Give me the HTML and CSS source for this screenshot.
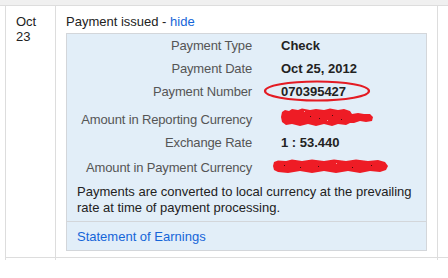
FILE: index.html
```html
<!DOCTYPE html>
<html lang="en">
<head>
  <meta charset="UTF-8" />
  <title>Payment history</title>
  <link rel="stylesheet" href="styles.css">
</head>
<body>
  <div class="top-strip"></div>

  <div class="entry">
    <div class="cell date-cell">Oct<br>23</div>
    <div class="cell detail-cell">
      <div class="event-title">Payment issued - <a href="#" class="link">hide</a></div>

      <div class="payment-box">
        <div class="payment-grid">
          <div class="label">Payment Type</div>
          <div class="value">Check</div>

          <div class="label">Payment Date</div>
          <div class="value">Oct 25, 2012</div>

          <div class="label">Payment Number</div>
          <div class="value"><span class="circled">070395427<svg class="circle-mark" width="110" height="24" viewBox="0 0 110 24"><ellipse cx="55" cy="12" rx="52" ry="9.5" fill="none" stroke="#e41b23" stroke-width="2.2"/></svg></span></div>

          <div class="label row-tall">Amount in Reporting Currency</div>
          <div class="value row-tall">
            <svg class="redact redact-a" width="94" height="19" viewBox="0 0 94 19">
              <path d="M1 9 L2 4 L5 2 L9 3 L12 1 L18 2 L22 0.5 L30 2 L36 1 L44 2 L50 0.5 L58 2 L64 1 L70 3 L72 6 L78 5 L84 6 L90 6 L93 9 L92 13 L86 14 L80 13 L74 15 L70 15 L66 17 L58 16 L52 18 L44 16 L36 18 L28 16 L20 18 L12 16 L6 17 L2 14 Z" fill="#ee1c25"/>
              <rect x="30" y="8" width="1" height="1" fill="#4a0c0c"/>
              <rect x="39" y="10" width="1" height="1" fill="#4a0c0c"/>
              <rect x="52" y="7" width="1" height="1" fill="#4a0c0c"/>
              <rect x="61" y="11" width="1" height="1" fill="#4a0c0c"/>
              <rect x="24" y="3" width="1" height="1" fill="#f6a0a0"/>
              <rect x="47" y="12" width="1" height="1" fill="#f6a0a0"/>
            </svg>
          </div>

          <div class="label">Exchange Rate</div>
          <div class="value">1 : 53.440</div>

          <div class="label row-mid">Amount in Payment Currency</div>
          <div class="value row-mid shift-left">
            <svg class="redact redact-b" width="117" height="15" viewBox="0 0 117 15">
              <path d="M1 7 L2 3 L6 1.5 L14 2 L20 0.5 L30 2 L40 0.5 L52 2 L62 0.5 L74 2 L84 0.5 L96 2 L106 1 L113 3 L116 7 L114 11 L108 13 L98 12 L88 14 L76 12 L64 14 L52 12 L40 14 L28 12 L16 14 L6 13 L2 11 Z" fill="#ee1c25"/>
              <rect x="12" y="6" width="1" height="1" fill="#4a0c0c"/>
              <rect x="28" y="8" width="1" height="1" fill="#4a0c0c"/>
              <rect x="46" y="7" width="1" height="1" fill="#4a0c0c"/>
              <rect x="80" y="8" width="1" height="1" fill="#4a0c0c"/>
              <rect x="99" y="6" width="1" height="1" fill="#4a0c0c"/>
              <rect x="64" y="4" width="1" height="1" fill="#f6a0a0"/>
            </svg>
          </div>
        </div>

        <p class="note">Payments are converted to local currency at the prevailing rate at time of payment processing.</p>

        <div class="box-footer">
          <a href="#" class="link">Statement of Earnings</a>
        </div>
      </div>
    </div>
    <div class="cell extra-cell"></div>
  </div>

  <div class="entry entry-next">
    <div class="cell date-cell"></div>
    <div class="cell detail-cell"></div>
    <div class="cell extra-cell"></div>
  </div>
</body>
</html>
```

FILE: styles.css
```css
body {
  margin: 0;
  font-family: "Liberation Sans", Arial, sans-serif;
  font-size: 13px;
  line-height: 15px;
  color: #222;
  background: #fff;
  overflow: hidden;
}

.top-strip {
  height: 5px;
  background: #f0f0f0;
  border-bottom: 1px solid #dddddd;
}

.entry {
  display: flex;
  margin-left: 5px;
  border-left: 1px solid #dddddd;
  border-bottom: 1px solid #dddddd;
}

.entry-next {
  height: 2px;
  border-bottom: none;
}

.cell {
  box-sizing: border-box;
}

.date-cell {
  width: 50px;
  padding: 8px 0 0 10px;
  border-right: 1px solid #dddddd;
}

.detail-cell {
  width: 382px;
  padding: 8px 10px 6px 10px;
  border-right: 1px solid #dddddd;
}

.entry-next .date-cell,
.entry-next .detail-cell {
  padding: 0;
}

.extra-cell {
  flex: 1;
}

.link {
  color: #1565d8;
  text-decoration: none;
}

.event-title {
  margin-bottom: 4px;
}

.payment-box {
  width: 361px;
  box-sizing: border-box;
  background: #e2eef8;
  border: 1px solid #d3d6da;
}

.payment-grid {
  display: grid;
  grid-template-columns: 185px auto;
  column-gap: 29px;
}

.label {
  text-align: right;
  color: #555;
  letter-spacing: -0.15px;
  padding: 4px 0;
}

.value {
  font-weight: bold;
  color: #222;
  padding: 4px 0;
}

.row-tall {
  padding-top: 9px;
}

.row-mid {
  padding-top: 6px;
}

.shift-left {
  margin-left: -9px;
}

.circled {
  position: relative;
}

.circle-mark {
  position: absolute;
  left: -19px;
  top: -5px;
}

.redact {
  display: block;
}

.redact-a {
  margin: -4px 0 -4px -1px;
}

.redact-b {
  margin: -1px 0 -1px 0;
}

.note {
  margin: 5px 0 0 0;
  padding: 0 10px 5px 10px;
  line-height: 16px;
  color: #222;
  border-bottom: 1px solid #d3d6da;
}

.box-footer {
  padding: 7px 10px 6px 10px;
}
```
